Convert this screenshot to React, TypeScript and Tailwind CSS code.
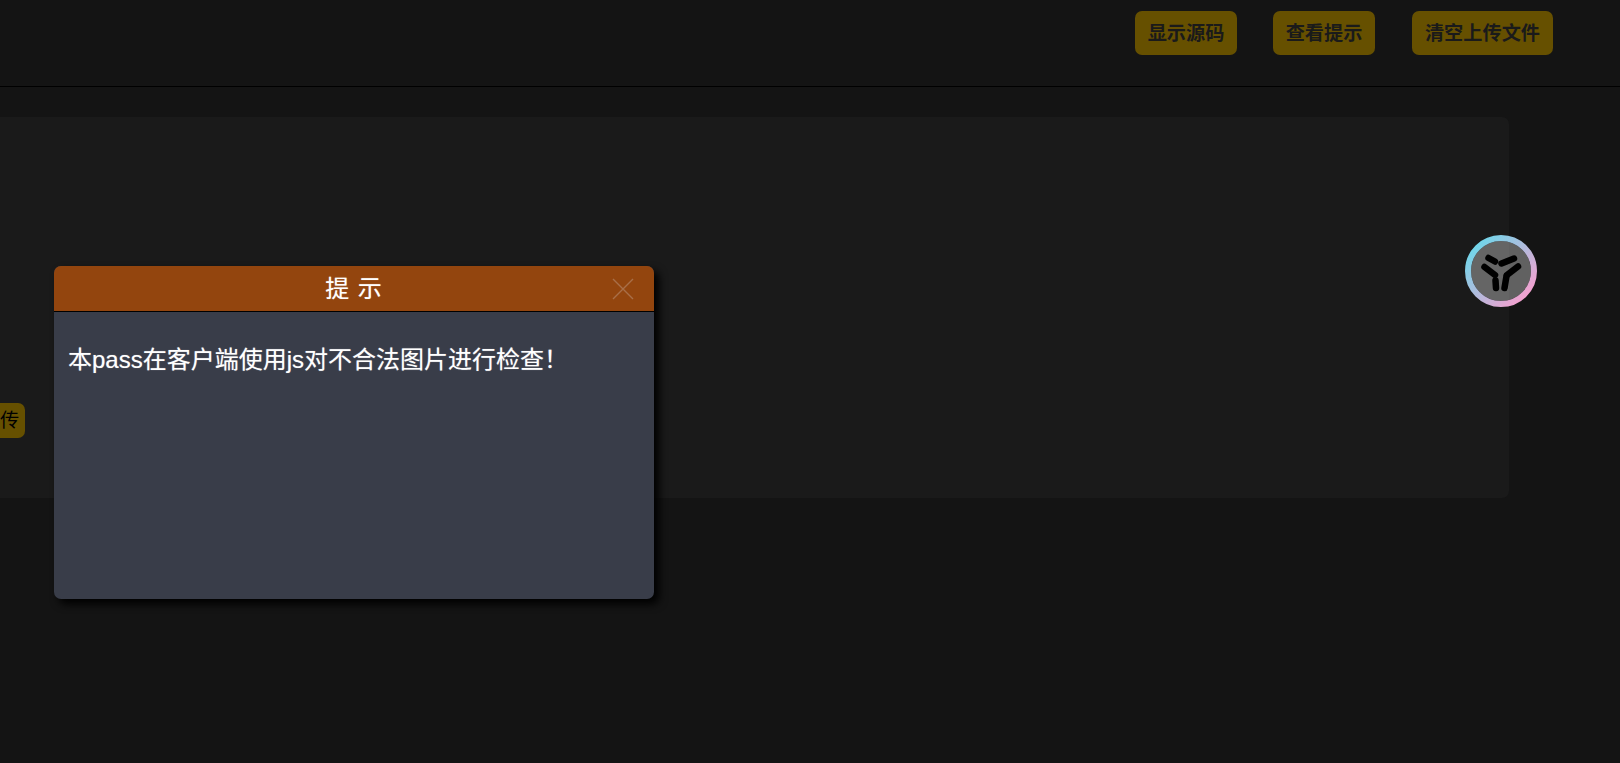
export default function App() {
  const font = { fontFamily: '"Liberation Sans", "Noto Sans CJK SC", sans-serif' };
  return (
    <div className="relative h-[763px] w-[1620px] overflow-hidden bg-[#141414]" style={font}>
      <header className="flex h-[87px] items-start border-b border-black pt-[11px] pl-[1135px]">
        <button className="h-[44px] w-[102px] rounded-[7px] bg-[#665000] pt-[2px] text-[19.2px] font-bold text-[#1a1a1a]">显示源码</button>
        <button className="ml-[36px] h-[44px] w-[102px] rounded-[7px] bg-[#665000] pt-[2px] text-[19.2px] font-bold text-[#1a1a1a]">查看提示</button>
        <button className="ml-[37px] h-[44px] w-[141px] rounded-[7px] bg-[#665000] pt-[2px] text-[19.2px] font-bold text-[#1a1a1a]">清空上传文件</button>
      </header>
      <main className="ml-[-40px] mt-[30px] flex h-[381px] w-[1549px] items-start rounded-[7px] bg-[#1a1a1a] pl-[5px] pt-[286px]">
        <button className="h-[35px] w-[60px] rounded-[7px] bg-[#665000] pl-[35px] pt-[2px] text-left text-[19.2px] text-black">传</button>
      </main>

      <svg className="absolute left-[1465px] top-[235px]" width="72" height="72" viewBox="0 0 72 72" fill="none">
        <defs>
          <linearGradient id="ring" x1="0" y1="0" x2="1" y2="1">
            <stop offset="0.1" stopColor="#6fd6ea" />
            <stop offset="0.9" stopColor="#f6a0cf" />
          </linearGradient>
        </defs>
        <circle cx="36" cy="36" r="30" fill="#ffffff" fillOpacity="0.33" />
        <circle cx="36" cy="36" r="33" stroke="url(#ring)" strokeWidth="6" />
        <g stroke="#000" strokeWidth="6.5" strokeLinecap="round">
          <path d="M23.5 23 L30 26.5" />
          <path d="M36.5 28.5 L49 23.5" />
          <path d="M19.5 32 L30 40" />
          <path d="M42 40 L53 31.5" />
          <path d="M30.5 45.5 L31 53" />
          <path d="M41.5 41 L39.5 53" />
        </g>
      </svg>

      <div className="absolute left-[54px] top-[266px] flex h-[333px] w-[600px] flex-col overflow-hidden rounded-[7px] bg-[#393d49] shadow-[5px_5px_8px_#000000]">
        <div className="relative flex h-[46px] shrink-0 items-center justify-center border-b border-black bg-[#93450e] text-[24px] tracking-[1px] text-white [text-shadow:0_0_1px_rgba(255,255,255,0.5)]">
          提 示
          <svg className="absolute right-[19px] top-[11px]" width="24" height="24" viewBox="0 0 24 24" stroke="#a86f48" strokeWidth="1.4">
            <path d="M2 2 L22 22 M22 2 L2 22" />
          </svg>
        </div>
        <p className="px-[14px] pt-[30px] text-[24px] leading-[36px] text-white [text-shadow:0_0_1px_rgba(255,255,255,0.5)]">本pass在客户端使用js对不合法图片进行检查！</p>
      </div>
    </div>
  );
}
